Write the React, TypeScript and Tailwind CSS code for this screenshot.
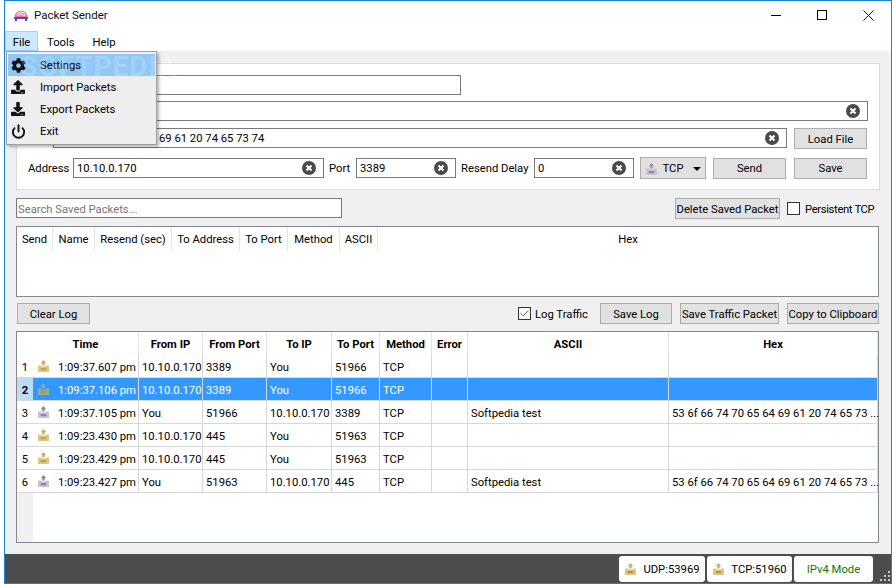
import React from 'react';
import { Check, Power } from 'lucide-react';
import { FaCog, FaDownload, FaUpload } from 'react-icons/fa';

const font = { fontFamily: 'Roboto, "Noto Sans", sans-serif' };

const NetIcon = ({ color, label, arrow }: { color: string; label: string; arrow: string }) => (
  <svg width="13" height="13" viewBox="0 0 14 14" className="shrink-0">
    <path d="M7 0 L10 3.5 L8.2 3.5 L8.2 6 L5.8 6 L5.8 3.5 L4 3.5 Z" fill={arrow} />
    <path d="M1 6 H4 L5 7 H9 L10 6 H13 V13 H1 Z" fill={color} />
    <rect x="4" y="8.5" width="6" height="2.5" fill={label} opacity="0.7" />
  </svg>
);

const ClearIcon = () => (
  <svg width="14" height="14" viewBox="0 0 14 14" className="shrink-0">
    <circle cx="7" cy="7" r="7" fill="#4a4a4a" />
    <path d="M4.5 4.5 L9.5 9.5 M9.5 4.5 L4.5 9.5" stroke="#fff" strokeWidth="2" />
  </svg>
);

const Btn = ({ children, className }: { children: React.ReactNode; className: string }) => (
  <div className={`flex shrink-0 items-center justify-center border border-[#adadad] bg-[#e1e1e1] pt-[2px] text-[11.25px] leading-none text-black whitespace-nowrap ${className}`}>
    {children}
  </div>
);

const Field = ({ value, clear, className }: { value: string; clear?: boolean; className: string }) => (
  <div className={`flex shrink-0 items-center justify-between border border-[#7a7a7a] bg-white pl-[3px] pr-[7px] text-[11.25px] leading-none text-black ${className}`}>
    <span className="whitespace-nowrap pt-[2px]">{value}</span>
    {clear && <ClearIcon />}
  </div>
);

const savedCols = [
  { label: 'Send', w: 'w-[36px]' },
  { label: 'Name', w: 'w-[42px]' },
  { label: 'Resend (sec)', w: 'w-[77px]' },
  { label: 'To Address', w: 'w-[68px]' },
  { label: 'To Port', w: 'w-[48px]' },
  { label: 'Method', w: 'w-[52px]' },
  { label: 'ASCII', w: 'w-[38px]' },
  { label: 'Hex', w: 'w-[500px]' },
];

const logCols = [
  { label: 'Time', w: 'w-[106px]' },
  { label: 'From IP', w: 'w-[64px]' },
  { label: 'From Port', w: 'w-[64px]' },
  { label: 'To IP', w: 'w-[65px]' },
  { label: 'To Port', w: 'w-[48px]' },
  { label: 'Method', w: 'w-[52px]' },
  { label: 'Error', w: 'w-[36px]' },
  { label: 'ASCII', w: 'w-[201px]' },
  { label: 'Hex', w: 'w-[209px]' },
];

const hex = '53 6f 66 74 70 65 64 69 61 20 74 65 73 ...';

const rows = [
  { time: '1:09:37.607 pm', from: '10.10.0.170', fromPort: '3389', to: 'You', toPort: '51966', ascii: '', hex: '', sent: false },
  { time: '1:09:37.106 pm', from: '10.10.0.170', fromPort: '3389', to: 'You', toPort: '51966', ascii: '', hex: '', sent: false, selected: true },
  { time: '1:09:37.105 pm', from: 'You', fromPort: '51966', to: '10.10.0.170', toPort: '3389', ascii: 'Softpedia test', hex, sent: true },
  { time: '1:09:23.430 pm', from: '10.10.0.170', fromPort: '445', to: 'You', toPort: '51963', ascii: '', hex: '', sent: false },
  { time: '1:09:23.429 pm', from: '10.10.0.170', fromPort: '445', to: 'You', toPort: '51963', ascii: '', hex: '', sent: false },
  { time: '1:09:23.427 pm', from: 'You', fromPort: '51963', to: '10.10.0.170', toPort: '445', ascii: 'Softpedia test', hex, sent: true },
];

const menuItems = [
  { label: 'Settings', icon: <FaCog size={15} color="#111" />, active: true },
  { label: 'Import Packets', icon: <FaUpload size={14} color="#111" /> },
  { label: 'Export Packets', icon: <FaDownload size={14} color="#111" /> },
  { label: 'Exit', icon: <Power size={15} strokeWidth={3} color="#111" /> },
];

const FileMenu = () => (
  <div className="absolute left-[1px] top-[22px] z-10 w-[151px] border border-[#a0a0a0] bg-[#eeeeee] px-[1px] pb-[2px] pt-[2px] text-[11.25px] text-black shadow-[2px_2px_3px_rgba(0,0,0,0.3)]">
    {menuItems.map((m) => (
      <div key={m.label} className={`flex h-[22px] items-center ${m.active ? 'bg-[#90c8f6]' : ''}`}>
        <span className="flex w-[20px] justify-center">{m.icon}</span>
        <span className="ml-[12px] pt-[3px]">{m.label}</span>
      </div>
    ))}
    <div className="pointer-events-none absolute left-[13px] top-[1px] text-[28px] font-bold leading-none tracking-[1px] text-white/20 whitespace-nowrap">SOFTPEDIA</div>
  </div>
);

const LogTable = () => (
  <div className="flex h-[212px] w-[863px] flex-col border border-[#828790] bg-white text-[11.25px] text-black">
    <div className="flex h-[23px] shrink-0">
      <div className="w-[16px] shrink-0 bg-white" />
      {logCols.map((c) => (
        <div key={c.label} className={`${c.w} flex shrink-0 items-center justify-center border-r border-[#e5e5e5] pt-[3px] font-bold`}>{c.label}</div>
      ))}
    </div>
    {rows.map((r, i) => {
      const cell = `flex shrink-0 items-center whitespace-nowrap border-r border-[#d8d8d8] pl-[3px] ${r.selected ? 'text-white' : ''}`;
      return (
        <div key={r.time} className={`flex h-[23px] shrink-0 border-b border-[#d8d8d8] ${r.selected ? 'bg-[#3399ff]' : ''}`}>
          <div className={`flex w-[16px] shrink-0 items-center justify-center pt-[4px] ${r.selected ? 'bg-[#bfdcf2] font-bold' : 'bg-white'}`}>{i + 1}</div>
          <div className={`${cell} w-[106px] gap-[8px] pl-[4px]`}>
            <NetIcon
              color={r.sent ? '#c9c5d0' : r.selected ? '#8fae96' : '#dcc981'}
              arrow={r.sent ? '#8a8a8a' : r.selected ? '#8fae96' : '#c9ae55'}
              label={r.sent ? '#7a5fc0' : '#c08a50'}
            />
            <span className="pt-[4px]">{r.time}</span>
          </div>
          <div className={`${cell} w-[64px] pt-[4px]`}>{r.from}</div>
          <div className={`${cell} w-[64px] pt-[4px]`}>{r.fromPort}</div>
          <div className={`${cell} w-[65px] pt-[4px]`}>{r.to}</div>
          <div className={`${cell} w-[48px] pt-[4px]`}>{r.toPort}</div>
          <div className={`${cell} w-[52px] pt-[4px]`}>TCP</div>
          <div className={`${cell} w-[36px]`} />
          <div className={`${cell} w-[201px] pt-[4px]`}>{r.ascii}</div>
          <div className={`${cell} w-[209px] pt-[4px]`}>{r.hex}</div>
        </div>
      );
    })}
    <div className="min-h-0 flex-1">
      <div className="h-full w-[16px] bg-[#f0f0f0]" />
    </div>
  </div>
);

export default function App() {
  return (
    <div className="h-[584px] w-[892px] overflow-hidden bg-white pl-[4px]" style={font}>
      <div className="relative flex h-[584px] w-[888px] flex-col border border-[#1883d7]">
        {/* title bar */}
        <div className="flex h-[28px] shrink-0 items-center justify-between bg-white">
          <div className="flex items-center">
            <svg width="16" height="13" viewBox="0 0 16 13" className="ml-[8px]">
              <path d="M1.5 8 A6.5 6.5 0 0 1 14.5 8 Z" fill="#f07a8a" />
              <path d="M4 7 A4 4 0 0 1 12 7 M6 7 A2 2 0 0 1 10 7" stroke="#fff" strokeWidth="1" fill="none" />
              <rect x="1" y="8" width="14" height="2" fill="#4a4ad0" />
              <rect x="2" y="10" width="2" height="2" fill="#4a4ad0" />
              <rect x="12" y="10" width="2" height="2" fill="#4a4ad0" />
            </svg>
            <span className="ml-[5px] pt-px text-[11.5px] text-[#111]">Packet Sender</span>
          </div>
          <div className="flex items-center">
            <div className="flex w-[46px] justify-center"><div className="h-px w-[10px] bg-black" /></div>
            <div className="flex w-[46px] justify-center"><div className="h-[10px] w-[10px] border border-black" /></div>
            <div className="flex w-[46px] justify-center">
              <svg width="11" height="11" viewBox="0 0 11 11"><path d="M0.5 0.5 L10.5 10.5 M10.5 0.5 L0.5 10.5" stroke="#111" strokeWidth="1" /></svg>
            </div>
          </div>
        </div>

        {/* menu bar */}
        <div className="relative flex h-[22px] shrink-0 items-end bg-white text-[11.25px] text-black">
          <div className="flex h-[20px] w-[33px] items-center justify-center border border-[#99d1ff] bg-[#cce8ff] pt-[4px]">File</div>
          <div className="ml-[9px] flex h-[20px] items-center pt-[4px]">Tools</div>
          <div className="ml-[18px] flex h-[20px] items-center pt-[4px]">Help</div>
          <FileMenu />
        </div>

        {/* main */}
        <div className="flex min-h-0 flex-1 flex-col bg-[#f0f0f0] pl-[11px] pt-[12px] text-[11.25px] text-black">
          <div className="flex h-[127px] w-[864px] shrink-0 flex-col border border-[#dcdcdc] bg-white pl-[11px] pt-[11px]">
            <Field value="" className="ml-[25px] h-[20px] w-[408px]" />
            <Field value="" clear className="ml-[25px] mt-[6px] h-[20px] w-[815px]" />
            <div className="mt-[7px] flex items-start">
              <div className="ml-[25px] flex h-[20px] w-[734px] shrink-0 items-center justify-between border border-[#7a7a7a] bg-white pr-[7px]">
                <span className="ml-[105px] pt-[2px]">69 61 20 74 65 73 74</span>
                <ClearIcon />
              </div>
              <Btn className="ml-[7px] h-[21px] w-[73px]">Load File</Btn>
            </div>
            <div className="mt-[8px] flex items-center">
              <span className="w-[45px] shrink-0 pt-[2px]">Address</span>
              <Field value="10.10.0.170" clear className="h-[20px] w-[251px]" />
              <span className="ml-[5px] w-[27px] shrink-0 pt-[2px]">Port</span>
              <Field value="3389" clear className="h-[20px] w-[100px]" />
              <span className="ml-[5px] w-[73px] shrink-0 whitespace-nowrap pt-[2px]">Resend Delay</span>
              <Field value="0" clear className="h-[20px] w-[100px]" />
              <Btn className="ml-[6px] h-[22px] w-[66px] gap-[5px]">
                <NetIcon color="#c9c5d0" arrow="#9a9a9a" label="#7a5fc0" />
                <span>TCP</span>
                <span className="ml-[5px] h-0 w-0 border-x-[4px] border-t-[4px] border-x-transparent border-t-black" />
              </Btn>
              <Btn className="ml-[7px] h-[21px] w-[73px]">Send</Btn>
              <Btn className="ml-[8px] h-[21px] w-[73px]">Save</Btn>
            </div>
          </div>

          <div className="mt-[8px] flex h-[22px] w-[863px] shrink-0 items-start">
            <div className="flex h-[20px] w-[326px] shrink-0 items-center border border-[#7a7a7a] bg-white pl-[1px] pt-[5px] text-[#777]">Search Saved Packets...</div>
            <Btn className="ml-[333px] h-[21px] w-[105px]">Delete Saved Packet</Btn>
            <div className="ml-[7px] mt-[4px] h-[13px] w-[13px] shrink-0 border border-[#333] bg-white" />
            <span className="ml-[5px] mt-[4px] whitespace-nowrap tracking-[-0.35px]">Persistent TCP</span>
          </div>

          <div className="mt-[6px] h-[71px] w-[863px] shrink-0 border border-[#828790] bg-white">
            <div className="flex h-[24px]">
              {savedCols.map((c) => (
                <div key={c.label} className={`${c.w} flex shrink-0 items-center justify-center border-r border-[#e5e5e5] pt-[3px] last:border-r-0`}>{c.label}</div>
              ))}
            </div>
          </div>

          <div className="ml-px mt-[6px] flex h-[21px] w-[862px] shrink-0 items-center">
            <Btn className="h-[21px] w-[73px]">Clear Log</Btn>
            <div className="ml-[428px] flex h-[13px] w-[13px] shrink-0 items-center justify-center border border-[#333] bg-white">
              <Check size={11} strokeWidth={2} color="#555" />
            </div>
            <span className="ml-[4px] w-[52px] shrink-0 whitespace-nowrap pt-[4px]">Log Traffic</span>
            <Btn className="ml-[13px] h-[21px] w-[72px]">Save Log</Btn>
            <Btn className="ml-[8px] h-[21px] w-[99px]">Save Traffic Packet</Btn>
            <Btn className="ml-[8px] h-[21px] w-[92px]">Copy to Clipboard</Btn>
          </div>

          <div className="mt-[7px]">
            <LogTable />
          </div>
        </div>

        {/* status bar */}
        <div className="flex h-[29px] shrink-0 items-end justify-end gap-[2px] bg-[#4d4d4d] pb-[1px] text-[11.25px] text-black">
          <div className="flex h-[26px] w-[86px] items-center justify-center gap-[6px] rounded-[3px] bg-white">
            <NetIcon color="#dcc981" arrow="#c9ae55" label="#d06040" />
            <span className="pt-[2px]">UDP:53969</span>
          </div>
          <div className="flex h-[26px] w-[85px] items-center justify-center gap-[6px] rounded-[3px] bg-white">
            <NetIcon color="#dcc981" arrow="#c9ae55" label="#a08040" />
            <span className="pt-[2px]">TCP:51960</span>
          </div>
          <div className="flex h-[26px] w-[79px] items-center justify-center rounded-[3px] bg-white pt-[2px] text-[#0a7a0a]">IPv4 Mode</div>
          <svg width="16" height="10" viewBox="0 0 16 10" className="mb-[1px]">
            <g fill="#c8c8c8">
              <rect x="13" y="0" width="2" height="2" />
              <rect x="9" y="4" width="2" height="2" />
              <rect x="13" y="4" width="2" height="2" />
              <rect x="5" y="8" width="2" height="2" />
              <rect x="9" y="8" width="2" height="2" />
              <rect x="13" y="8" width="2" height="2" />
            </g>
          </svg>
        </div>
      </div>
    </div>
  );
}
